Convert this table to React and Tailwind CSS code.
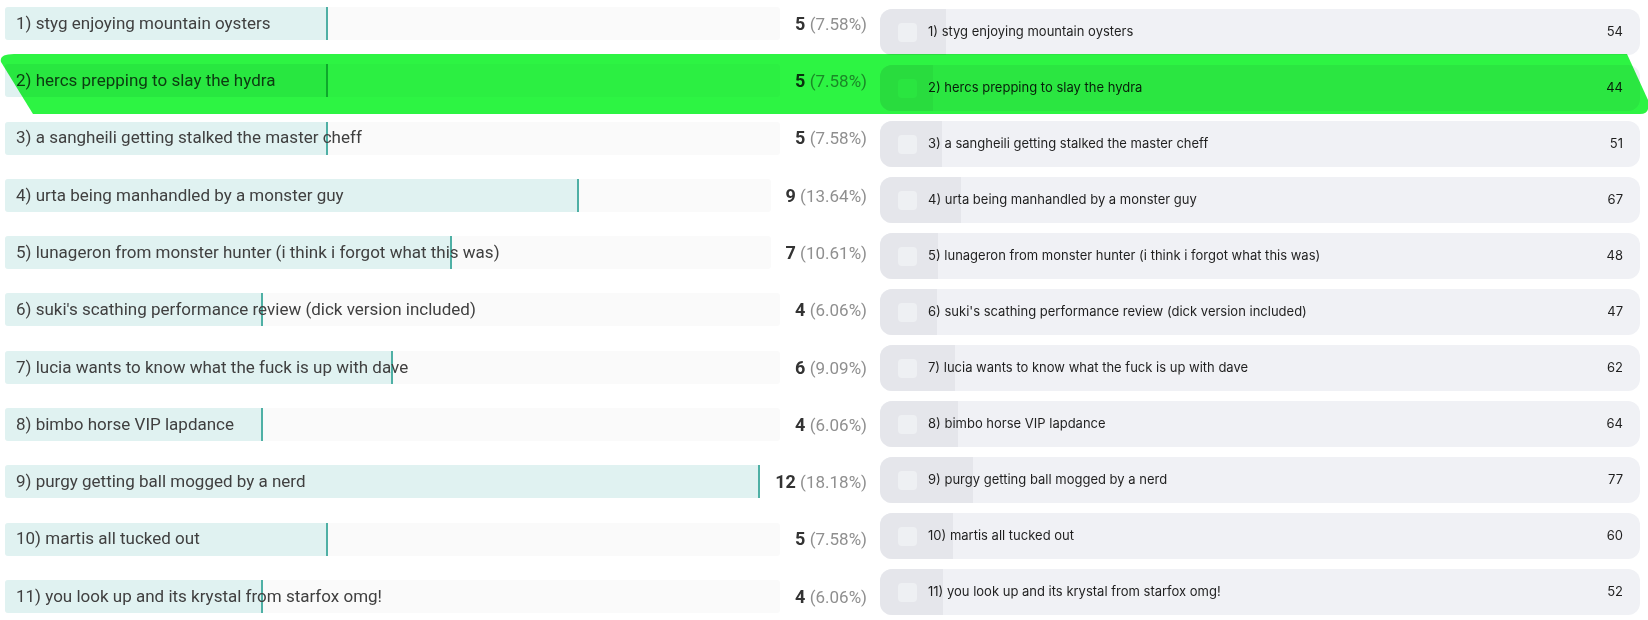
import React from 'react'

const entries = [
  { label: '1) styg enjoying mountain oysters', votes: 5, score: 54 },
  { label: '2) hercs prepping to slay the hydra', votes: 5, score: 44 },
  { label: '3) a sangheili getting stalked the master cheff', votes: 5, score: 51 },
  { label: '4) urta being manhandled by a monster guy', votes: 9, score: 67 },
  { label: '5) lunageron from monster hunter (i think i forgot what this was)', votes: 7, score: 48 },
  { label: "6) suki's scathing performance review (dick version included)", votes: 4, score: 47 },
  { label: '7) lucia wants to know what the fuck is up with dave', votes: 6, score: 62 },
  { label: '8) bimbo horse VIP lapdance', votes: 4, score: 64 },
  { label: '9) purgy getting ball mogged by a nerd', votes: 12, score: 77 },
  { label: '10) martis all tucked out', votes: 5, score: 60 },
  { label: '11) you look up and its krystal from starfox omg!', votes: 4, score: 52 },
]

const totalVotes = entries.reduce((sum, e) => sum + e.votes, 0)
const maxVotes = Math.max(...entries.map((e) => e.votes))
const totalScore = entries.reduce((sum, e) => sum + e.score, 0)

const ResultRow = ({ entry }) => {
  const pct = ((entry.votes / totalVotes) * 100).toFixed(2)
  return (
    <div className="flex items-center h-[33px]">
      <div className="relative flex-1 h-full bg-[#fafafa] rounded-[3px]">
        <div
          className="absolute left-0 top-0 h-full bg-[#e0f2f1] border-r-2 border-[#4fb0a5] rounded-l-[3px]"
          style={{ width: `${(entry.votes / maxVotes) * 100}%` }}
        />
        <div className="relative h-full flex items-center pl-[11px] text-[17px] text-[#404040] whitespace-nowrap">
          {entry.label}
        </div>
      </div>
      <div className="ml-[15px] text-[17px] whitespace-nowrap text-right">
        <span className="font-bold text-[18px] text-[#333]">{entry.votes}</span>{' '}
        <span className="text-[#8f8f8f]">({pct}%)</span>
      </div>
    </div>
  )
}

const VoteRow = ({ entry }) => (
  <div className="relative flex items-center h-[46px] rounded-[12px] bg-[#f0f1f5] overflow-hidden">
    <div
      className="absolute left-0 top-0 h-full bg-[#e5e6eb]"
      style={{ width: `${(entry.score / totalScore) * 100}%` }}
    />
    <div className="relative flex items-center w-full pl-[18px] pr-[17px]">
      <div className="w-[19px] h-[19px] rounded-[4px] bg-[#eef0f3] shrink-0" />
      <div className="ml-[11px] flex-1 text-[13px] text-[#1f1f1f] whitespace-nowrap">{entry.label}</div>
      <div className="text-[13px] text-[#1f1f1f]">{entry.score}</div>
    </div>
  </div>
)

export default function App() {
  return (
    <div className="relative w-[1648px] h-[620px] bg-white overflow-hidden">
      <div className="flex">
        {/* results */}
        <div
          className="w-[862px] ml-[5px] pt-[7px] flex flex-col gap-[24.3px]"
          style={{ fontFamily: 'Roboto, "Liberation Sans", sans-serif' }}
        >
          {entries.map((e) => (
            <ResultRow key={e.label} entry={e} />
          ))}
        </div>

        {/* vote list */}
        <div
          className="w-[760px] ml-[13px] pt-[9px] flex flex-col gap-[10px]"
          style={{ fontFamily: 'Inter, "Noto Sans", sans-serif' }}
        >
          {entries.map((e) => (
            <VoteRow key={e.label} entry={e} />
          ))}
        </div>
      </div>

      {/* highlighter */}
      <svg
        className="absolute inset-0 pointer-events-none mix-blend-multiply"
        width="1648"
        height="620"
        viewBox="0 0 1648 620"
      >
        <path
          d="M14 54 L1627 54 L1648 100 L1648 109 Q1647 114 1640 114 L33 114 L1 62 Q-1 54 14 54 Z"
          fill="#2df443"
        />
      </svg>
    </div>
  )
}
